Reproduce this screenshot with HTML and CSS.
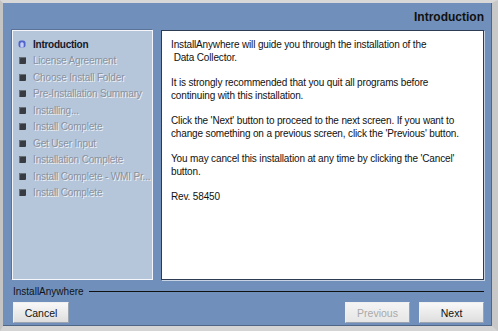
FILE: index.html
```html
<!DOCTYPE html>
<html lang="en">
<head>
  <meta charset="UTF-8" />
  <title>InstallAnywhere - Introduction</title>
  <link rel="stylesheet" href="styles.css">
</head>
<body>

<div class="window">
  <div class="header">Introduction</div>

  <div class="panels">
    <ul class="steps">
      <li class="step active">
        <svg class="bullet" width="8" height="8" viewBox="0 0 8 8">
          <rect x="0.5" y="0.5" width="7" height="7" rx="2.5" fill="#4f63cc"/>
          <rect x="2.3" y="2.3" width="3.4" height="5.2" rx="1.5" fill="#c4ccf2"/>
        </svg>
        Introduction
      </li>
      <li class="step"><span class="square"></span>License Agreement</li>
      <li class="step"><span class="square"></span>Choose Install Folder</li>
      <li class="step"><span class="square"></span>Pre-Installation Summary</li>
      <li class="step"><span class="square"></span>Installing...</li>
      <li class="step"><span class="square"></span>Install Complete</li>
      <li class="step"><span class="square"></span>Get User Input</li>
      <li class="step"><span class="square"></span>Installation Complete</li>
      <li class="step"><span class="square"></span>Install Complete - WMI Pr...</li>
      <li class="step"><span class="square"></span>Install Complete</li>
    </ul>

    <div class="content">
      <p>InstallAnywhere will guide you through the installation of the<br>&nbsp;Data Collector.</p>
      <p>It is strongly recommended that you quit all programs before continuing with this installation.</p>
      <p>Click the 'Next' button to proceed to the next screen. If you want to change something on a previous screen, click the 'Previous' button.</p>
      <p>You may cancel this installation at any time by clicking the 'Cancel' button.</p>
      <p>Rev. 58450</p>
    </div>
  </div>

  <div class="brand">
    <span>InstallAnywhere</span>
    <div class="brand-line"></div>
  </div>

  <div class="buttons">
    <button class="btn">Cancel</button>
    <div class="nav">
      <button class="btn disabled">Previous</button>
      <button class="btn">Next</button>
    </div>
  </div>
</div>

</body>
</html>
```

FILE: styles.css
```css
body {
  margin: 0;
  padding: 0;
  font-family: 'Liberation Sans', Arial, sans-serif;
  font-size: 10px;
  background-color: #d6d6d6;
}

.window {
  width: 498px;
  height: 331px;
  box-sizing: border-box;
  background-color: #7090bb;
  border-top: 3px solid #d8d8d8;
  border-left: 3px solid #c4c4c4;
  border-right: 6px solid #c8c8c8;
  border-bottom: 5px solid #d4d4d4;
  box-shadow: inset -1px -1px 0 #4f6686;
  display: flex;
  flex-direction: column;
}

.header {
  height: 27px;
  line-height: 29px;
  text-align: right;
  padding-right: 8px;
  font-size: 12px;
  font-weight: bold;
  color: #111;
}

.panels {
  display: flex;
  gap: 8px;
  padding-left: 9px;
  padding-right: 8px;
  height: 250px;
}

.steps {
  list-style: none;
  margin: 0;
  padding: 5px 0 0 5px;
  width: 141px;
  box-sizing: border-box;
  background-color: #b5c5da;
  border: 1px solid #f4f6fa;
  box-shadow: -1px -1px 0 #5a7396;
}

.step {
  display: flex;
  align-items: center;
  gap: 7px;
  height: 16.5px;
  color: #8a929e;
  text-shadow: 1px 1px 0 #eef2f8;
  white-space: nowrap;
  letter-spacing: -0.15px;
}

.step.active {
  color: #15182a;
  text-shadow: none;
  font-weight: bold;
  letter-spacing: -0.25px;
}

.bullet {
  width: 8px;
  height: 8px;
  flex-shrink: 0;
}

.square {
  width: 7px;
  height: 7px;
  margin-left: 1px;
  border-radius: 1px;
  background-color: #383c42;
  box-shadow: inset 1px 1px 0 #6a7078;
  flex-shrink: 0;
}

.content {
  flex: 1;
  background-color: #fff;
  border: 1px solid #2d3c52;
  box-shadow: 1px 1px 0 #c8d4e4;
  padding: 7px 10px 0 9px;
  color: #111;
  line-height: 13px;
  letter-spacing: -0.15px;
}

.content p {
  margin: 0 0 12px 0;
}

.brand {
  display: flex;
  align-items: center;
  gap: 5px;
  margin-top: 5px;
  padding-left: 10px;
  padding-right: 8px;
  height: 13px;
  color: #101418;
}

.brand-line {
  flex: 1;
  height: 1px;
  background-color: #111;
}

.buttons {
  display: flex;
  justify-content: space-between;
  padding-left: 10px;
  padding-right: 8px;
  margin-top: 4px;
}

.nav {
  display: flex;
  gap: 9px;
}

.btn {
  font-family: 'Liberation Sans', Arial, sans-serif;
  font-size: 10.5px;
  color: #111;
  height: 21px;
  padding: 0;
  width: 56px;
  border: 1px solid #9aa4b0;
  border-top-color: #f0f0f0;
  border-left-color: #f0f0f0;
  background: linear-gradient(#f8f8f8, #dedede);
}

.nav .btn {
  width: 65px;
}

.btn.disabled {
  color: #a9a9a9;
  background: linear-gradient(#f4f4f4, #e6e6e6);
}
```
